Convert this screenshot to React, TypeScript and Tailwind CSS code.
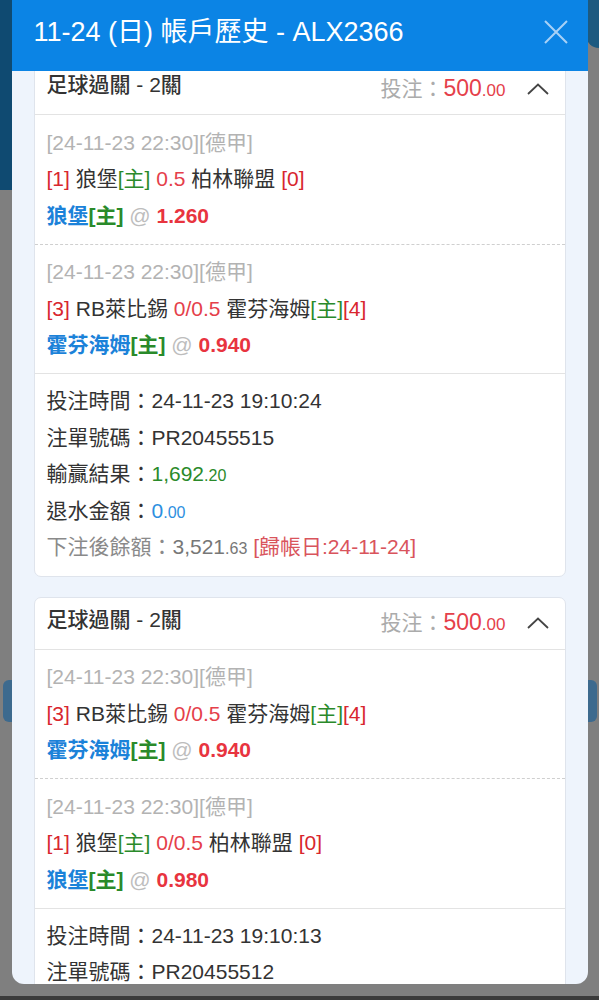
type Leg = {
  s1: string;
  team1: string;
  home1: boolean;
  hdp: string;
  team2: string;
  home2: boolean;
  s2: string;
  pick: string;
  odds: string;
};

type Ticket = {
  legs: Leg[];
  time: string;
  id: string;
};

const wolfsburg: Leg = {
  s1: "1",
  team1: "狼堡",
  home1: true,
  hdp: "0.5",
  team2: "柏林聯盟",
  home2: false,
  s2: "0",
  pick: "狼堡",
  odds: "1.260",
};

const leipzig: Leg = {
  s1: "3",
  team1: "RB萊比錫",
  home1: false,
  hdp: "0/0.5",
  team2: "霍芬海姆",
  home2: true,
  s2: "4",
  pick: "霍芬海姆",
  odds: "0.940",
};

const tickets: Ticket[] = [
  { legs: [wolfsburg, leipzig], time: "24-11-23 19:10:24", id: "PR20455515" },
  {
    legs: [leipzig, { ...wolfsburg, hdp: "0/0.5", odds: "0.980" }],
    time: "24-11-23 19:10:13",
    id: "PR20455512",
  },
];

function Money({ int, dec, className }: { int: string; dec: string; className: string }) {
  return (
    <span className={className}>
      {int}
      <span className="text-[16px] leading-none">.{dec}</span>
    </span>
  );
}

function LegRow({ leg }: { leg: Leg }) {
  return (
    <div className="px-[12px] pb-[9.5px] pt-[9.5px] leading-[36.5px]">
      <p className="text-[#b3b3b3]">[24-11-23 22:30][德甲]</p>
      <p className="text-[#333]">
        <span className="text-[#d8262e]">[{leg.s1}]</span> {leg.team1}
        {leg.home1 && <span className="text-[#2a8a2a]">[主]</span>}{" "}
        <span className="text-[#e5404a]">{leg.hdp}</span> {leg.team2}
        {leg.home2 ? <span className="text-[#2a8a2a]">[主]</span> : " "}
        <span className="text-[#d8262e]">[{leg.s2}]</span>
      </p>
      <p className="font-bold">
        <span className="text-[#1b82d9]">{leg.pick}</span>
        <span className="text-[#2a8a2a]">[主]</span>
        <span className="font-normal text-[#bdbdbd]"> @ </span>
        <span className="text-[#e8343f]">{leg.odds}</span>
      </p>
    </div>
  );
}

function TicketCard({ t }: { t: Ticket }) {
  return (
    <div className="rounded-[7px] border border-[#dfe4ec] bg-white">
      <div className="flex h-[52px] items-center justify-between border-b border-[#e3e3e3] pl-[12px] pr-[16px]">
        <span className="mb-[7px] font-medium text-[#333]">足球過關 - 2關</span>
        <div className="flex items-center gap-[21px]">
          <span className="text-[#ababab]">
            投注：
            <span className="text-[23px] leading-none text-[#e5404a]">
              500<span className="text-[17px]">.00</span>
            </span>
          </span>
          <svg width="22" height="12" viewBox="0 0 22 12" fill="none">
            <path d="M1 11 L11 1.5 L21 11" stroke="#444" strokeWidth="1.8" />
          </svg>
        </div>
      </div>
      {t.legs.map((leg, i) => (
        <div
          key={i}
          className={i === 0 ? "border-b border-dashed border-[#cfcfcf]" : "border-b border-[#e3e3e3]"}
        >
          <LegRow leg={leg} />
        </div>
      ))}
      <div className="px-[12px] pb-[10px] pt-[9px] leading-[36.5px] text-[#333]">
        <p>投注時間：{t.time}</p>
        <p>注單號碼：{t.id}</p>
        <p>
          輸贏結果：<Money int="1,692" dec="20" className="text-[#2a8a2a]" />
        </p>
        <p>
          退水金額：<Money int="0" dec="00" className="text-[#2d8fe0]" />
        </p>
        <p className="text-[#8a8a8a]">
          下注後餘額：<Money int="3,521" dec="63" className="text-[#777]" />{" "}
          <span className="text-[#d9545c]">[歸帳日:24-11-24]</span>
        </p>
      </div>
    </div>
  );
}

export default function App() {
  return (
    <div
      lang="zh-Hant-TW"
      className="relative h-[1000px] w-full overflow-hidden bg-[#7f7f7f] text-[21px]"
      style={{ fontFamily: '"Liberation Sans", "Noto Sans CJK TC", sans-serif' }}
    >
      {/* dimmed page behind the modal */}
      <div className="flex h-full flex-col">
        <div className="flex flex-1 justify-between">
          <div className="flex w-[12px] flex-col">
            <div className="h-[190px] bg-[#0f4a71]" />
            <div className="ml-[3px] mt-[490px] h-[42px] rounded-l-[6px] bg-[#3d6a8e]" />
          </div>
          <div className="flex w-[13px] flex-col">
            <div className="h-[48px] rounded-bl-[14px] bg-[#1d5a80]" />
            <div className="mr-[2px] mt-[632px] h-[42px] rounded-r-[6px] bg-[#3d6a8e]" />
          </div>
        </div>
        <div className="h-[4px] bg-[#3b3b3b]" />
      </div>

      {/* modal */}
      <div className="absolute left-[11.5px] top-0 flex h-[984px] w-[576px] flex-col overflow-hidden rounded-b-[12px] bg-[#eef4fc]">
        <div className="flex h-[71px] shrink-0 items-center justify-between bg-[#0b84e5] pl-[22px] pr-[19px]">
          <h1 className="mb-[7px] text-[27px] text-white">11-24 (日) 帳戶歷史 - ALX2366</h1>
          <svg width="26" height="26" viewBox="0 0 26 26" className="mb-[7px]">
            <path d="M2 2 L24 24 M24 2 L2 24" stroke="#a8d1f6" strokeWidth="2" />
          </svg>
        </div>
        <div className="flex-1 overflow-hidden px-[22px]">
          <div className="-mt-[9px] flex flex-col gap-[20px]">
            {tickets.map((t, i) => (
              <TicketCard key={i} t={t} />
            ))}
          </div>
        </div>
      </div>
    </div>
  );
}
